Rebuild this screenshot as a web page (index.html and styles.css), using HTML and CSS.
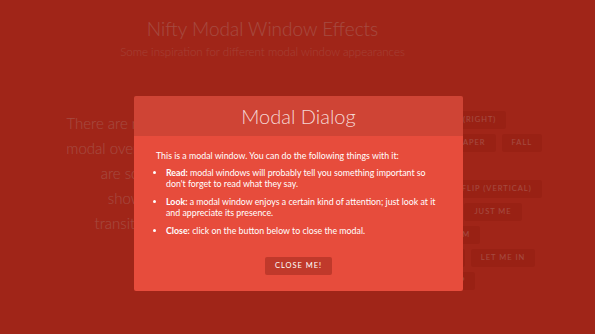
FILE: index.html
```html
<!DOCTYPE html>
<html lang="en">
<head>
<meta charset="utf-8">
<title>Nifty Modal Window Effects</title>
<link rel="stylesheet" href="styles.css">
</head>
<body>
<div class="page">
  <header class="site-header">
    <h1 class="title">Nifty Modal Window Effects</h1>
    <p class="subtitle">Some inspiration for different modal window appearances</p>
  </header>
  <div class="columns">
    <div class="col-left">
      <p class="intro">There are many possibilities for<br>modal overlays to appear. Here<br>are some modern ways of<br>showing them using CSS<br>transitions and animations.</p>
    </div>
    <div class="col-right">
      <div class="row"><button class="btn">Fade in &amp; Scale</button><button class="btn">Slide in (right)</button></div>
      <div class="row"><button class="btn">Slide in (bottom)</button><button class="btn">Newspaper</button><button class="btn">Fall</button></div>
      <div class="row"><button class="btn">Side Fall</button><button class="btn">Sticky Up</button></div>
      <div class="row"><button class="btn">3D Flip (horizontal)</button><button class="btn">3D Flip (vertical)</button></div>
      <div class="row"><button class="btn">3D Sign</button><button class="btn">Super Scaled</button><button class="btn">Just Me</button></div>
      <div class="row"><button class="btn">3D Slit</button><button class="btn">3D Rotate Bottom</button></div>
      <div class="row"><button class="btn">3D Rotate In Left</button><button class="btn">Blur</button><button class="btn">Let me in</button></div>
      <div class="row"><button class="btn">Make way!</button><button class="btn">Slip from top</button></div>
    </div>
  </div>
</div>

<div class="overlay"></div>

<div class="modal">
  <h3 class="modal-title">Modal Dialog</h3>
  <div class="modal-body">
    <p class="modal-text">This is a modal window. You can do the following things with it:</p>
    <ul class="modal-list">
      <li><strong>Read:</strong> modal windows will probably tell you something important so don't forget to read what they say.</li>
      <li><strong>Look:</strong> a modal window enjoys a certain kind of attention; just look at it and appreciate its presence.</li>
      <li><strong>Close:</strong> click on the button below to close the modal.</li>
    </ul>
    <button class="btn btn-close">Close me!</button>
  </div>
</div>
</body>
</html>
```

FILE: styles.css
```css
html, body {
  margin: 0;
  padding: 0;
}

body {
  background: #e74c3c;
  color: #fff;
  font-family: Lato, "Open Sans", sans-serif;
  width: 595px;
  height: 334px;
  overflow: hidden;
}

.page {
  width: 595px;
}

.site-header {
  width: 525px;
  text-align: center;
  padding-top: 15px;
}

.title {
  margin: 0;
  font-size: 19px;
  line-height: 28px;
  font-weight: 300;
}

.subtitle {
  margin: 0;
  font-size: 11.5px;
  line-height: 18px;
  font-weight: 300;
  opacity: 0.7;
}

.columns {
  display: flex;
  margin-top: 50px;
}

.col-left {
  width: 267px;
  flex: none;
}

.intro {
  margin: 0;
  text-align: right;
  font-size: 15px;
  line-height: 25px;
  font-weight: 300;
}

.col-right {
  padding-left: 44px;
  display: flex;
  flex-direction: column;
  gap: 5px;
}

.row {
  display: flex;
  gap: 6px;
  white-space: nowrap;
}

.btn {
  border: none;
  margin: 0;
  padding: 5px 10px;
  background: #c0392b;
  color: #fff;
  font-family: Lato, "Open Sans", sans-serif;
  font-size: 7.5px;
  line-height: 8px;
  letter-spacing: 1px;
  text-transform: uppercase;
  border-radius: 2px;
  white-space: nowrap;
}

.overlay {
  position: fixed;
  inset: 0;
  background: rgba(143, 27, 15, 0.8);
}

.modal {
  position: fixed;
  left: 134px;
  top: 96px;
  width: 329px;
  background: #e74c3c;
  color: #fff;
  border-radius: 2px;
}

.modal-title {
  margin: 0;
  height: 40px;
  line-height: 40px;
  text-align: center;
  font-size: 20px;
  font-weight: 300;
  color: rgba(255, 255, 255, 0.8);
  background: rgba(0, 0, 0, 0.1);
  border-radius: 2px 2px 0 0;
}

.modal-body {
  padding: 14px 22px 16px;
  font-size: 8.8px;
  line-height: 11px;
}

.modal-text {
  margin: 0 0 6px;
}

.modal-list {
  margin: 0;
  padding: 0 0 0 10px;
  display: flex;
  flex-direction: column;
  gap: 7px;
}

.modal-list strong {
  font-weight: 700;
}

.btn-close {
  display: block;
  margin: 21px auto 0;
  padding: 5px 10px;
  font-size: 7.5px;
}
```
